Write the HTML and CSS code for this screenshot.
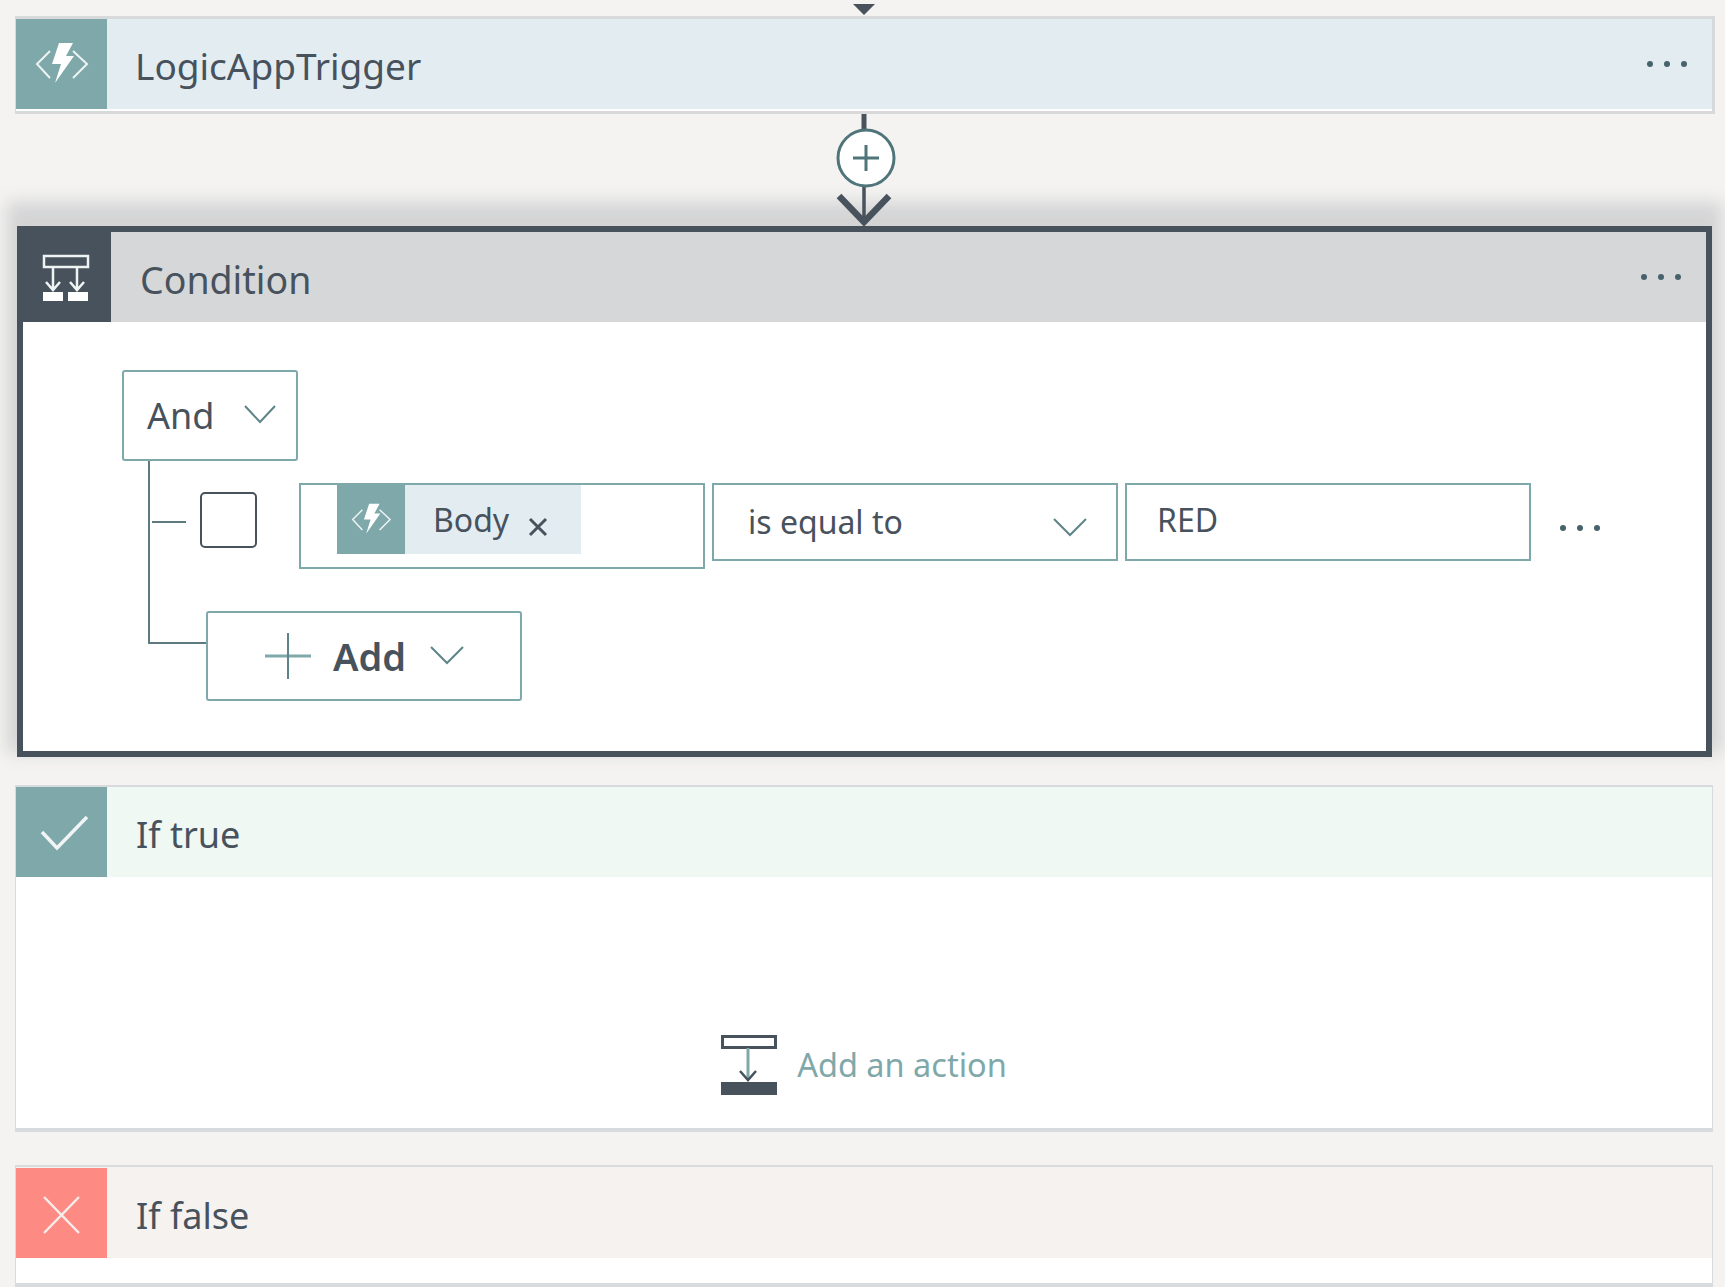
FILE: index.html
```html
<!DOCTYPE html>
<html lang="en">
<head>
  <meta charset="UTF-8" />
  <meta name="viewport" content="width=device-width, initial-scale=1.0"/>
  <title>Condition</title>
  <link rel="stylesheet" href="styles.css">
</head>
<body>

<svg width="0" height="0" class="defs">
  <symbol id="fn-icon" viewBox="0 0 91 90">
    <path d="M34 32 21 45 34 59M57 32 71 45 57 59" fill="none" stroke="#eef3f3" stroke-width="2"/>
    <path d="M43 24H57L50 37H58L39 64 45 45H36Z" fill="#fff"/>
  </symbol>
</svg>

<main class="page">
  <svg class="top-arrow" width="24" height="16" viewBox="0 0 24 16"><path d="M1 4H23L12 15Z" fill="#47525d"/></svg>

  <section class="card trigger">
    <header class="card-head">
      <div class="tile"><svg class="tile-icon"><use href="#fn-icon"/></svg></div>
      <h2>LogicAppTrigger</h2>
      <div class="more"><i></i><i></i><i></i></div>
    </header>
  </section>

  <svg class="connector" width="100" height="112" viewBox="0 1 100 112">
    <path d="M50 0V18" stroke="#47525d" stroke-width="5"/>
    <path d="M50 70V106" stroke="#47525d" stroke-width="3.5"/>
    <path d="M25 83 50 109 75 83" fill="none" stroke="#47525d" stroke-width="6.5"/>
    <circle cx="52" cy="45" r="28" fill="#fff" stroke="#4f7479" stroke-width="3"/>
    <path d="M39 45H65M52 32V58" stroke="#4f7479" stroke-width="3"/>
  </svg>

  <section class="condition">
    <header class="card-head">
      <div class="tile tile-dark">
        <svg class="tile-icon" viewBox="0 0 88 90">
          <g fill="none" stroke="#eef3f3" stroke-width="2.5">
            <rect x="21" y="24" width="44" height="11"/>
            <path d="M30 35V56M54 35V56M23 50 30 58 37 50M47 50 54 58 61 50"/>
          </g>
          <path d="M20 60H40V69H20ZM45 60H65V69H45Z" fill="#fff"/>
        </svg>
      </div>
      <h2>Condition</h2>
      <div class="more"><i></i><i></i><i></i></div>
    </header>

    <div class="condition-body">
      <div class="select and-select">
        <span>And</span>
        <svg class="chevron" width="32" height="20" viewBox="0 0 32 20"><path d="M1 2 16 18 31 2"/></svg>
      </div>
      <div class="tree">
        <div class="tree-row">
          <div class="tick tick-short"></div>
          <div class="checkbox"></div>
          <div class="field body-field">
            <div class="token">
              <div class="token-tile"><svg class="tile-icon"><use href="#fn-icon"/></svg></div>
              <span class="token-name">Body</span>
              <svg class="token-x" width="22" height="22" viewBox="0 0 22 22"><path d="M3 3 19 19M19 3 3 19"/></svg>
            </div>
          </div>
          <div class="field op-field">
            <span>is equal to</span>
            <svg class="chevron" width="34" height="20" viewBox="0 0 34 20"><path d="M1 2 17 18 33 2"/></svg>
          </div>
          <div class="field value-field"><span>RED</span></div>
          <div class="more row-more"><i></i><i></i><i></i></div>
        </div>
        <div class="tree-row add-row">
          <div class="tick tick-long"></div>
          <div class="select add-btn">
            <svg class="plus" width="46" height="46" viewBox="0 0 46 46"><path d="M0 23H46" stroke="#7fa8aa" stroke-width="3"/><path d="M23 0V46" stroke="#5d8488" stroke-width="2"/></svg>
            <span>Add</span>
            <svg class="chevron" width="34" height="20" viewBox="0 0 34 20"><path d="M1 2 17 18 33 2"/></svg>
          </div>
        </div>
      </div>
    </div>
  </section>

  <section class="card branch branch-true">
    <header class="card-head">
      <div class="tile">
        <svg class="tile-icon" viewBox="0 0 91 90"><path d="M26 45 41 61 71 30" fill="none" stroke="#f1f5f5" stroke-width="3.5"/></svg>
      </div>
      <h2>If true</h2>
    </header>
    <div class="branch-body">
      <svg class="add-icon" width="56" height="60" viewBox="0 0 56 60">
        <rect x="1.5" y="1.5" width="53" height="11" fill="#fff" stroke="#47525d" stroke-width="3"/>
        <path d="M27 13V44" stroke="#7fa8aa" stroke-width="3"/>
        <path d="M19 36 27 45 35 36" fill="none" stroke="#47525d" stroke-width="2.5"/>
        <rect x="0" y="47" width="56" height="13" fill="#47525d"/>
      </svg>
      <span class="add-action">Add an action</span>
    </div>
  </section>

  <section class="card branch branch-false">
    <header class="card-head">
      <div class="tile tile-red">
        <svg class="tile-icon" viewBox="0 0 91 90"><path d="M28 29 63 65M63 29 28 65" fill="none" stroke="#f6eeec" stroke-width="2.5"/></svg>
      </div>
      <h2>If false</h2>
    </header>
    <div class="false-body"></div>
  </section>
</main>

</body>
</html>
```

FILE: styles.css
```css
html, body {
  height: 1287px;
  overflow: hidden;
}
body {
  margin: 0;
  background: #f4f3f1;
  font-family: "Noto Sans", "Open Sans", sans-serif;
  color: #47525d;
}
.defs {
  display: block;
  height: 0;
}
.page {
  width: 1698px;
  margin-left: 15px;
  display: flex;
  flex-direction: column;
  align-items: center;
}
.top-arrow {
  display: block;
  height: 16px;
  flex: none;
}
.card {
  width: 100%;
  box-sizing: border-box;
  background: #fff;
  border: 3px solid #d8d9da;
  border-left-width: 1px;
}
.trigger {
  align-self: flex-start;
  width: 1700px;
  height: 98px;
  padding-bottom: 2px;
}
.trigger .card-head {
  background: #e3edf1;
}
.card-head {
  height: 90px;
  display: flex;
  align-items: center;
}
.card-head h2 {
  margin: 6px 0 0 29px;
  font-size: 36px;
  font-weight: 400;
  line-height: 1;
}
.trigger .card-head h2 {
  margin: 2px 0 0 28px;
  font-size: 37px;
}
.tile {
  width: 91px;
  height: 90px;
  flex: none;
  background: #7fa8aa;
}
.tile-icon {
  display: block;
  width: 100%;
  height: 100%;
}
.tile-dark {
  width: 88px;
  background: #47525d;
}
.tile-red {
  background: #fd8a83;
}
.more {
  margin-left: auto;
  margin-right: 25px;
  display: flex;
  gap: 11px;
}
.more i {
  width: 6px;
  height: 6px;
  border-radius: 50%;
  background: #47626b;
}
.connector {
  display: block;
  flex: none;
  position: relative;
  z-index: 1;
}
.condition {
  align-self: stretch;
  margin: 0 1px 0 2px;
  height: 531px;
  box-sizing: border-box;
  border: 6px solid #47525d;
  background: #fff;
  box-shadow: 0 -14px 16px 10px rgba(120, 125, 135, .26);
}
.condition .card-head {
  background: #d5d7d9;
}
.condition .card-head h2 {
  font-size: 37.5px;
}
.condition-body {
  padding: 48px 0 0 99px;
}
.select {
  box-sizing: border-box;
  background: #fff;
  border: 2px solid #7fa8aa;
  border-radius: 3px;
  display: flex;
  align-items: center;
}
.and-select {
  width: 176px;
  height: 91px;
  padding-left: 23px;
  font-size: 36px;
}
.and-select .chevron {
  margin-left: 30px;
  margin-top: -4px;
}
.chevron path {
  fill: none;
  stroke: #5d8488;
  stroke-width: 2;
}
.tree {
  margin-left: 26px;
  height: 183px;
  border-left: 2px solid #5d7a80;
}
.tree-row {
  display: flex;
  align-items: flex-start;
  padding-top: 22px;
}
.tick {
  flex: none;
  border-bottom: 2px solid #5d7a80;
}
.tick-short {
  width: 34px;
  margin: 38px 0 0 2px;
}
.tick-long {
  width: 56px;
  height: 31px;
}
.checkbox {
  width: 57px;
  height: 56px;
  box-sizing: border-box;
  margin: 9px 0 0 14px;
  border: 2px solid #47525d;
  border-radius: 5px;
}
.field {
  box-sizing: border-box;
  width: 406px;
  height: 78px;
  flex: none;
  background: #fff;
  border: 2px solid #7fa8aa;
  display: flex;
  align-items: center;
  font-size: 32px;
}
.body-field {
  height: 86px;
  margin-left: 42px;
  align-items: flex-start;
  padding-left: 36px;
}
.token {
  width: 244px;
  height: 69px;
  background: #e3edf1;
  display: flex;
  align-items: center;
}
.token-tile {
  width: 68px;
  height: 69px;
  background: #7fa8aa;
}
.token-name {
  margin-left: 28px;
  margin-top: 0;
}
.token-x {
  margin-left: 18px;
  margin-top: 15px;
}
.token-x path {
  fill: none;
  stroke: #47525d;
  stroke-width: 3;
}
.op-field {
  margin-left: 7px;
  padding: 0 29px 0 34px;
  justify-content: space-between;
}
.op-field span {
  margin-top: -2px;
}
.op-field .chevron {
  margin-top: 10px;
}
.value-field {
  margin-left: 7px;
  padding-left: 30px;
}
.value-field span {
  margin-top: -6px;
}
.row-more {
  margin: 42px 0 0 29px;
}
.add-row {
  padding-top: 42px;
}
.add-btn {
  flex: none;
  width: 316px;
  height: 90px;
  padding-left: 57px;
  font-size: 38px;
  font-weight: 600;
}
.add-btn .plus {
  margin-right: 22px;
}
.add-btn .chevron {
  margin-left: 24px;
  margin-top: -2px;
}
.branch {
  border-color: #d8dbdd;
  border-width: 2px 1px 4px 1px;
}
.branch-true {
  height: 347px;
  margin-top: 28px;
}
.branch-true .card-head {
  background: #eff8f2;
}
.branch-body {
  height: 251px;
  box-sizing: border-box;
  padding-bottom: 33px;
  display: flex;
  justify-content: center;
  align-items: flex-end;
  gap: 20px;
}
.add-action {
  font-size: 32.5px;
  color: #7fa8aa;
  line-height: 60px;
}
.branch-false {
  margin-top: 33px;
}
.branch-false .card-head {
  background: #f6f2ef;
  height: 91px;
}
.false-body {
  height: 25px;
}
```
